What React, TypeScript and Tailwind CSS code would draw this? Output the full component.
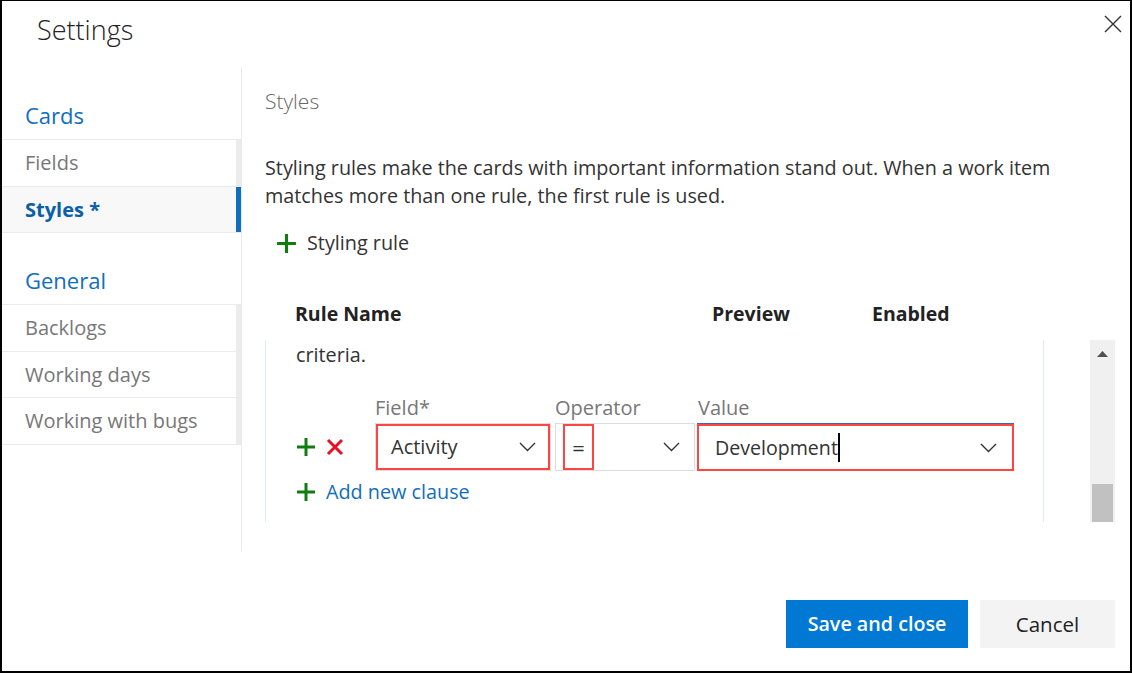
import React from "react";

const Plus = ({ size = 20 }: { size?: number }) => (
  <svg width={size} height={size} viewBox="0 0 20 20" className="shrink-0">
    <path d="M10 1v18M1 10h18" stroke="#107c10" strokeWidth="3" fill="none" />
  </svg>
);

const Cross = () => (
  <svg width="18" height="18" viewBox="0 0 18 18" className="shrink-0">
    <path d="M2 2l14 14M16 2L2 16" stroke="#e81123" strokeWidth="3" fill="none" />
  </svg>
);

const Chevron = () => (
  <svg width="17" height="10" viewBox="0 0 17 10" className="shrink-0">
    <polyline points="1,1 8.5,8.5 16,1" stroke="#333" strokeWidth="1.4" fill="none" />
  </svg>
);

function NavHeading({ label, h }: { label: string; h: string }) {
  return (
    <div className={`flex items-end pl-[23px] pb-[9px] text-[22px] leading-[30px] text-[#106ebe] ${h}`}>
      {label}
    </div>
  );
}

function NavItem({ label, h, active = false }: { label: string; h: string; active?: boolean }) {
  return (
    <div className={`flex items-center border-t border-[#eaeaea] ${h} ${active ? "bg-[#f8f8f8]" : ""}`}>
      <span
        className={`flex-1 pl-[23px] text-[20px] ${active ? "font-bold text-[#0b5ea8]" : "text-[#777]"}`}
      >
        {label}
      </span>
      <span className={`h-full w-[5px] ${active ? "bg-[#106ebe]" : "bg-[#ebebeb]"}`} />
    </div>
  );
}

export default function App() {
  return (
    <div className="relative flex h-[673px] w-[1132px] flex-col border-2 border-t border-black bg-white font-['Open_Sans',sans-serif] text-[#333]">
      {/* Header */}
      <div className="flex h-[66px] items-center pl-[35px] pb-[8px]">
        <h1 className="text-[27px] font-light text-[#222]">Settings</h1>
      </div>
      <button className="absolute right-[8px] top-[14px] p-0">
        <svg width="18" height="18" viewBox="0 0 18 18">
          <path d="M1 1l16 16M17 1L1 17" stroke="#333" strokeWidth="1.4" fill="none" />
        </svg>
      </button>

      {/* Body */}
      <div className="flex h-[484px]">
        {/* Sidebar */}
        <nav className="w-[240px] border-r border-[#eaeaea]">
          <NavHeading label="Cards" h="h-[72px]" />
          <NavItem label="Fields" h="h-[47px]" />
          <NavItem label="Styles *" h="h-[46px]" active />
          <div className="border-t border-[#eaeaea]" />
          <NavHeading label="General" h="h-[71px]" />
          <NavItem label="Backlogs" h="h-[47px]" />
          <NavItem label="Working days" h="h-[46px]" />
          <NavItem label="Working with bugs" h="h-[47px]" />
          <div className="border-t border-[#eaeaea]" />
        </nav>

        {/* Main */}
        <main className="flex flex-1 flex-col pl-[23px] pr-[15px] pt-[20px]">
          <h2 className="text-[21px] font-light leading-[28px] text-[#666]">Styles</h2>
          <p className="mt-[39px] text-[19.8px] leading-[28px]">
            Styling rules make the cards with important information stand out. When a work item
            <br />
            matches more than one rule, the first rule is used.
          </p>
          <div className="mt-[19px] flex items-center gap-[10px] pl-[11px] leading-[28px]">
            <Plus size={21} />
            <span className="text-[19.8px]">Styling rule</span>
          </div>

          <div className="mt-[43px] flex text-[19.5px] font-bold leading-[28px] text-[#222]">
            <span className="w-[447px] pl-[30px]">Rule Name</span>
            <span className="w-[160px]">Preview</span>
            <span>Enabled</span>
          </div>

          {/* Scroll area */}
          <div className="mt-[12px] flex h-[182px]">
            <div className="w-[779px] overflow-hidden border-x border-[#deecf9] pl-[30px] pt-[1px]">
              <div className="text-[19.8px] leading-[28px]">criteria.</div>
              <div className="mt-[25px] flex items-end">
                <div className="flex h-[48px] w-[79px] items-center gap-[10px]">
                  <Plus />
                  <Cross />
                </div>
                <div className="w-[180px]">
                  <div className="h-[29px] text-[20px] leading-[28px] text-[#777]">Field*</div>
                  <div className="h-[48px] w-[176px] border border-[#dcdcdc]">
                    <div className="flex h-full items-center justify-between border-2 border-[#ff4444] pl-[13px] pr-[12px]">
                      <span className="text-[20px]">Activity</span>
                      <Chevron />
                    </div>
                  </div>
                </div>
                <div className="w-[142px]">
                  <div className="h-[29px] text-[20px] leading-[28px] text-[#777]">Operator</div>
                  <div className="flex h-[48px] w-[140px] items-center justify-between border border-[#dcdcdc] pl-[7px] pr-[14px]">
                    <div className="flex h-full w-[31px] items-center justify-center border-2 border-[#ff4444] text-[22px]">
                      =
                    </div>
                    <Chevron />
                  </div>
                </div>
                <div className="w-[317px]">
                  <div className="h-[29px] pl-[1px] text-[20px] leading-[28px] text-[#777]">Value</div>
                  <div className="h-[48px] border-t border-[#2f6fb5]">
                    <div className="flex h-[47px] items-center justify-between border-2 border-[#ff4444] pl-[16px] pr-[15px]">
                      <span className="flex items-center text-[19.6px]">
                        Development
                        <span className="inline-block h-[29px] w-[2px] bg-black" />
                      </span>
                      <Chevron />
                    </div>
                  </div>
                </div>
              </div>
              <div className="mt-[7px] flex items-center gap-[10px] leading-[28px]">
                <Plus />
                <span className="text-[19.8px] text-[#106ebe]">Add new clause</span>
              </div>
            </div>
            <div className="flex-1" />
            {/* Scrollbar */}
            <div className="flex w-[25px] flex-col items-center bg-[#f0f0f0] pt-[11px]">
              <svg width="11" height="6" viewBox="0 0 11 6">
                <path d="M5.5 0L11 6H0z" fill="#505050" />
              </svg>
              <div className="flex-1" />
              <div className="h-[38px] w-[21px] bg-[#c1c1c1]" />
            </div>
          </div>
        </main>
      </div>

      {/* Footer */}
      <div className="flex flex-1 items-start justify-end gap-[12px] pr-[15px] pt-[49px]">
        <button className="h-[48px] w-[182px] bg-[#0078d4] text-[19.7px] font-semibold text-white">
          Save and close
        </button>
        <button className="h-[48px] w-[135px] bg-[#f3f3f3] text-[20.5px] text-[#222]">
          Cancel
        </button>
      </div>
    </div>
  );
}
